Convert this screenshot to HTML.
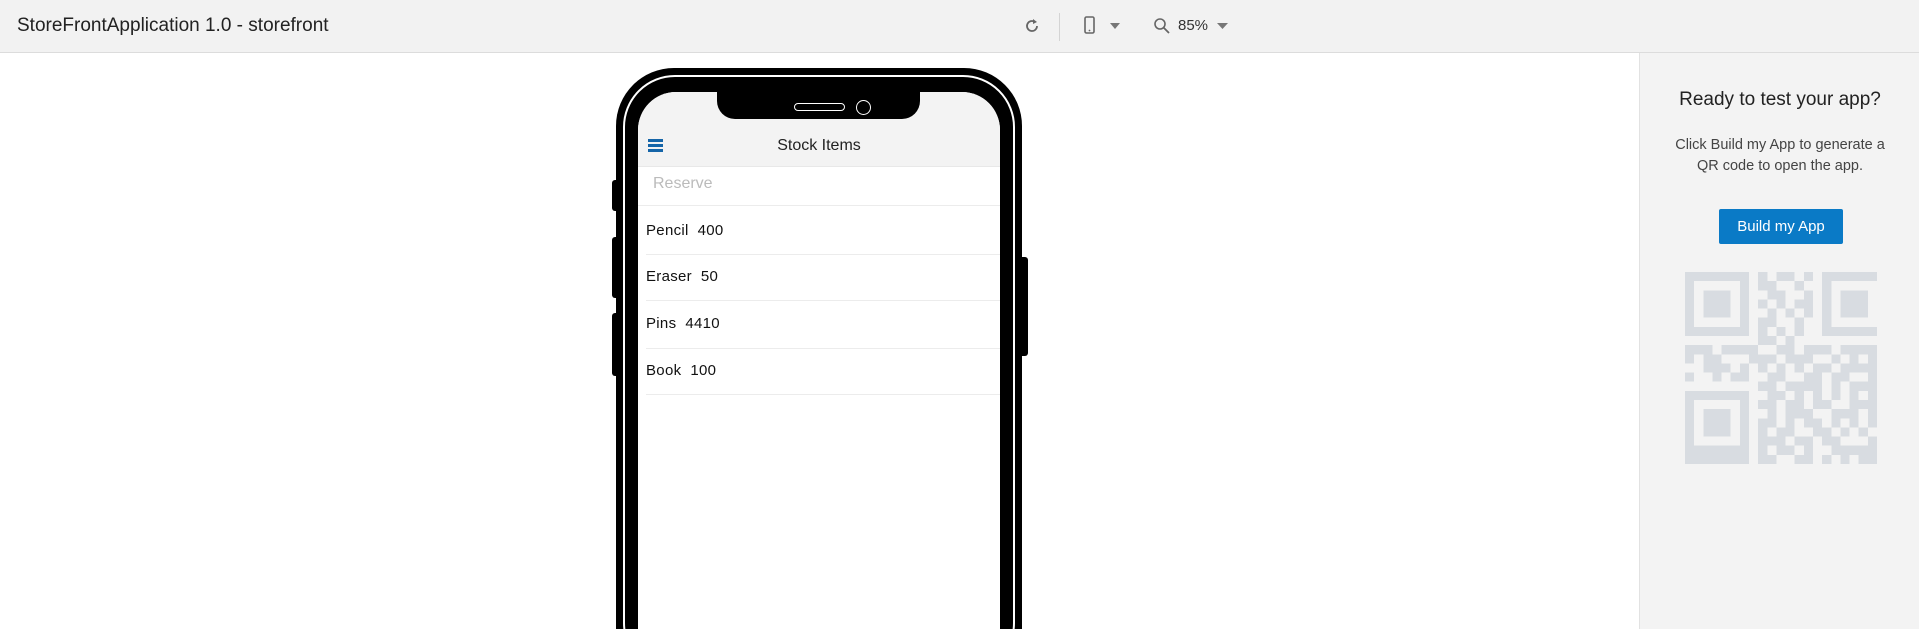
<!DOCTYPE html>
<html><head><meta charset="utf-8"><style>
*{margin:0;padding:0;box-sizing:border-box}
html,body{width:1919px;height:629px;overflow:hidden}
body{background:#fff;font-family:"Liberation Sans",sans-serif;position:relative}
#wrap{position:absolute;left:0;top:0;width:1919px;height:629px;overflow:hidden}
.top{position:absolute;left:0;top:0;width:1919px;height:53px;background:#f2f2f2;border-bottom:1px solid #dcdcdc}
.title{position:absolute;left:17px;top:15px;font-size:19px;color:#222}
.side{position:absolute;left:1639px;top:53px;width:280px;height:576px;background:#f3f3f3;border-left:1px solid #e2e2e2}
.phone{position:absolute;left:616px;top:68px;width:406px;height:561px;background:#000;border-radius:58px 58px 0 0;overflow:hidden}
.ring{position:absolute;left:7px;top:7px;right:7px;height:600px;border:2px solid #fff;border-radius:52px}
.screen{position:absolute;left:22px;top:24px;width:362px;height:537px;background:#fff;border-radius:38px 38px 0 0;overflow:hidden}
.btn{position:absolute;background:#000;border-radius:3px}
.row{position:absolute;left:8px;right:0;height:1px;background:#ececec}
.it{position:absolute;left:8px;font-size:15px;color:#111;letter-spacing:.3px}
</style></head><body><div id="wrap">
<div class="top">
<div class="title">StoreFrontApplication 1.0 - storefront</div>
<svg style="position:absolute;left:1022px;top:16px" width="20" height="20" viewBox="0 0 20 20"><path d="M15 10a5 5 0 1 1-2-4" fill="none" stroke="#666" stroke-width="1.8"/><path d="M11 3l4 3-4 2z" fill="#666"/></svg>
<div style="position:absolute;left:1059px;top:13px;width:1px;height:28px;background:#d4d4d4"></div>
<svg style="position:absolute;left:1083px;top:15px" width="40" height="22" viewBox="0 0 40 22"><rect x="2" y="2" width="9" height="16" rx="1.5" fill="none" stroke="#666" stroke-width="1.6"/><circle cx="6.5" cy="15.5" r=".9" fill="#666"/><path d="M27 8h10l-5 6z" fill="#777"/></svg>
<svg style="position:absolute;left:1152px;top:16px" width="20" height="20" viewBox="0 0 20 20"><circle cx="8" cy="8" r="5" fill="none" stroke="#666" stroke-width="1.6"/><path d="M12 12l5 5" stroke="#666" stroke-width="1.8"/></svg>
<div style="position:absolute;left:1178px;top:17px;font-size:15px;color:#333">85%</div>
<svg style="position:absolute;left:1216px;top:21px" width="14" height="10"><path d="M1 2h11l-5.5 6z" fill="#777"/></svg>
</div>
<div class="btn" style="left:612px;top:180px;width:8px;height:31px"></div>
<div class="btn" style="left:612px;top:237px;width:8px;height:61px"></div>
<div class="btn" style="left:612px;top:313px;width:8px;height:63px"></div>
<div class="btn" style="left:1018px;top:257px;width:10px;height:99px"></div>
<div class="phone"><div class="ring"></div>
<div class="screen">
<div style="position:absolute;left:0;top:0;width:362px;height:75px;background:#f3f3f3;border-bottom:1px solid #e8e8e8"></div>
<div style="position:absolute;left:79px;top:-5px;width:203px;height:32px;background:#000;border-radius:0 0 18px 18px"></div>
<div style="position:absolute;left:156px;top:11px;width:51px;height:8px;border:1.5px solid #fff;border-radius:4px"></div>
<div style="position:absolute;left:218px;top:8px;width:15px;height:15px;border:1.5px solid #fff;border-radius:50%"></div>
<div style="position:absolute;left:10px;top:47px;width:15px;height:3px;background:#1565a8;box-shadow:0 5px 0 #1565a8,0 10px 0 #1565a8"></div>
<div style="position:absolute;left:0;width:362px;top:45px;text-align:center;font-size:16px;color:#222">Stock Items</div>
<div style="position:absolute;left:15px;top:83px;font-size:16px;color:#bbb">Reserve</div>
<div class="row" style="top:113px;left:0"></div>
<div class="it" style="top:130px">Pencil&nbsp; 400</div>
<div class="row" style="top:162px"></div>
<div class="it" style="top:176px">Eraser&nbsp; 50</div>
<div class="row" style="top:208px"></div>
<div class="it" style="top:223px">Pins&nbsp; 4410</div>
<div class="row" style="top:256px"></div>
<div class="it" style="top:270px">Book&nbsp; 100</div>
<div class="row" style="top:302px"></div>
</div></div>
<div class="side">
<div style="position:absolute;left:0;width:280px;top:36px;text-align:center;font-size:19px;color:#222">Ready to test your app?</div>
<div style="position:absolute;left:0;width:280px;top:82px;text-align:center;font-size:14.5px;line-height:21px;color:#444">Click Build my App to generate a<br>QR code to open the app.</div>
<div style="position:absolute;left:79px;top:156px;width:124px;height:35px;background:#0a7ac6;border-radius:2px;color:#fff;font-size:15px;text-align:center;line-height:35px">Build my App</div>
<svg style="position:absolute;left:45px;top:219px" width="192" height="192" viewBox="0 0 21 21" shape-rendering="crispEdges" fill="#d8dce1" id="qr"></svg>
</div>
</div>
<script>
var m=["1111111010110101111111","1000001011001001000001","1011101001100101011101","1011101010101101011101","1011101001010101011101","1000001011001001000001","1111111010101001111111","0000000011010000000000","1110111100110111011110","1011000111011100101010","0011101010101011011110","1001011001100110110010","0000000011011110101110","1111111001101010101010","1000001011011011001110","1011101001011100111010","1011101011010110101010","1011101010110011010100","1000001011101101100010","1111111010110100111110","1111111011001101010110"];
var s="";for(var y=0;y<21;y++)for(var x=0;x<21;x++)if(m[y][x]=="1")s+='<rect x="'+x+'" y="'+y+'" width="1" height="1"/>';
document.getElementById("qr").innerHTML=s;
</script>
</body></html>
